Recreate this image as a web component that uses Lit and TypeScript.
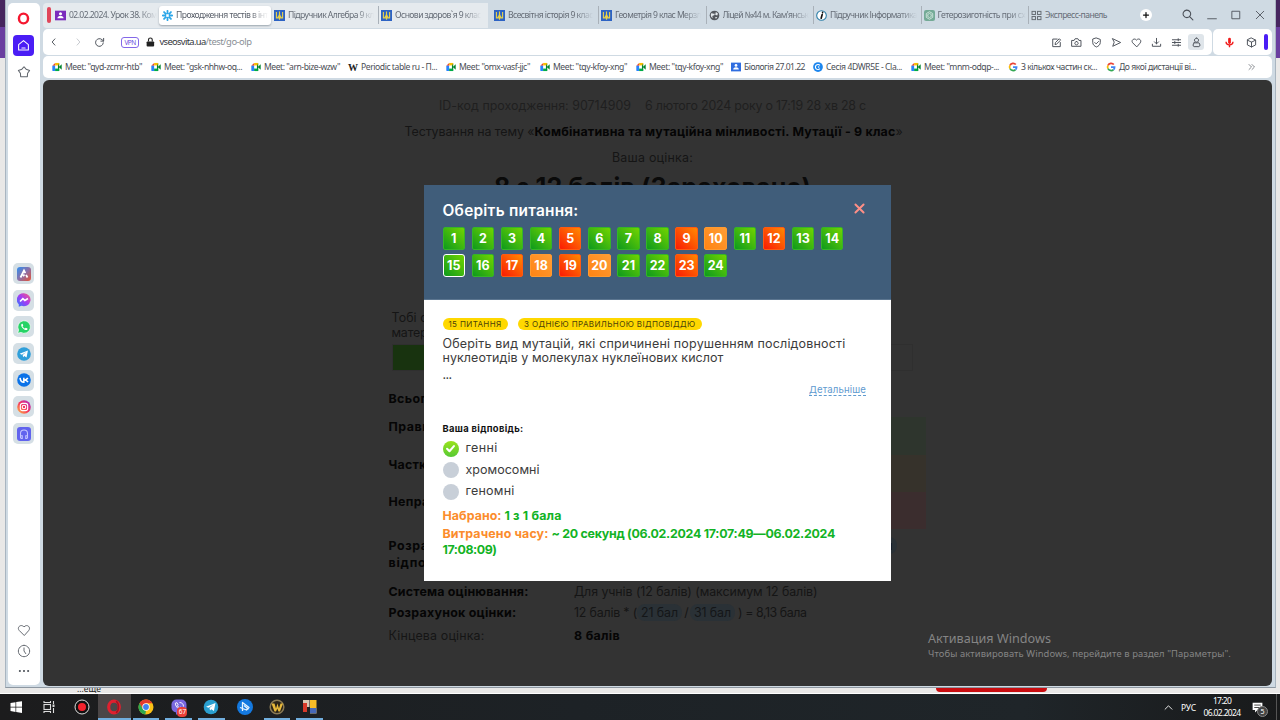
import { LitElement, html, css, svg, nothing } from "lit";
import { customElement, property, query } from "lit/decorators.js";
import { classMap } from "lit/directives/class-map.js";

/** A single line of text tracked so that it spans exactly `w` pixels. */
@customElement("fit-text")
class FitText extends LitElement {
  static styles = css`
    :host { display: inline-block; white-space: pre; flex: none; }
    .t { display: inline-block; vertical-align: top; }
  `;
  @property() text = "";
  @property({ type: Number }) w = 0;
  @query(".t") span!: HTMLElement;
  updated() {
    this.span.style.letterSpacing = "0px";
    const natural = this.span.getBoundingClientRect().width;
    const n = this.text.length;
    this.span.style.letterSpacing = `${(this.w - natural) / n}px`;
  }
  render() {
    return html`<span class="t">${this.text}</span>`;
  }
}

const fit = (text: string, w: number, cls = "") =>
  html`<fit-text class=${cls} .text=${text} .w=${w}></fit-text>`;

const icon = (size: number, body: unknown) =>
  html`<svg class="ic" width=${size} height=${size} viewBox="0 0 16 16" fill="none">${body}</svg>`;

const line = (d: string, c = "#4b5058", w = 1.4) =>
  svg`<path d=${d} stroke=${c} stroke-width=${w} stroke-linecap="round" stroke-linejoin="round"/>`;

const G: Record<string, unknown> = {
  contact: svg`<rect width="16" height="14" y="1" fill="#7b2bbd"/><circle cx="8" cy="5.5" r="2.2" fill="#fff"/><path d="M3.5 12c0-5 9-5 9 0z" fill="#fff"/>`,
  contactBlue: svg`<rect width="16" height="14" y="1" fill="#2f6de0"/><circle cx="8" cy="5.5" r="2.2" fill="#fff"/><path d="M3.5 12c0-5 9-5 9 0z" fill="#fff"/>`,
  flower: svg`<g stroke="#2ba6e8" stroke-width="2.6" stroke-linecap="round"><path d="M8 1.2V5M8 11v3.8M1.2 8H5M11 8h3.8M3 3l2.5 2.5M10.500 10.500L13 13M13 3l-2.500 2.500M5.500 10.500L3 13"/></g>`,
  trident: svg`<rect width="16" height="16" fill="#2d63c4"/><g stroke="#e8d24a" stroke-width="1.600"><path d="M3.500 3v8.500h9V3M8 2v12M5.800 11.500c0-3 2.200-2 2.200-6 0 4 2.200 3 2.200 6"/></g>`,
  globe: svg`<circle cx="8" cy="8" r="7" fill="#55595f"/><path d="M3 5c2-1 3 1 5 0 1 2-1 3-2 3S4 10 6 12c-3-1-4-4-3-7zM10 3l3 2-1 3-3-1zM9 10l3 0-2 3z" fill="#e4e9ed"/>`,
  info: svg`<circle cx="8" cy="8" r="7" fill="#fff" stroke="#2d7fa8" stroke-width="1.600"/><path d="M9 6.500L7.500 12M9.600 3.500v.4" stroke="#111" stroke-width="2.400" stroke-linecap="round"/>`,
  gpt: svg`<rect width="16" height="16" rx="3" fill="#74aa96"/><g stroke="#d9ebe3" stroke-width="1.200"><path d="M8 2.500l4.700 2.700v5.500L8 13.500l-4.700-2.800V5.200z"/><path d="M5.500 6.500L8 5l2.500 1.500v3L8 11 5.500 9.500z"/></g>`,
  grid: svg`<g stroke="#646a72" stroke-width="1.400"><rect x="1.500" y="2" width="5" height="4.500"/><rect x="9.500" y="2" width="5" height="4.500"/><rect x="1.500" y="9.500" width="5" height="4.500"/><rect x="9.500" y="9.500" width="5" height="4.500"/></g>`,
  meet: svg`<path d="M.5 6L5 1.500V6z" fill="#ea4335"/><path d="M5 1.500h6.500v4H5z" fill="#fbbc04"/><path d="M.5 6H5v8.500H2C1 14.500.5 14 .5 13z" fill="#2684fc"/><path d="M5 10.500h6.500v4H5z" fill="#00ac47"/><path d="M11.500 2v12.500L9.500 10V6zM11 8l4.500-4.500v9z" fill="#00832d"/>`,
  google: svg`<g stroke-width="2.800"><path d="M12.500 4A5.600 5.600 0 0 0 3.200 5.300" stroke="#ea4335"/><path d="M3.200 5.300a5.600 5.600 0 0 0 0 5.400" stroke="#fbbc04"/><path d="M3.200 10.700a5.600 5.600 0 0 0 8.800 1.400" stroke="#34a853"/><path d="M12 12.100c1.100-1 1.700-2.300 1.700-3.900H8" stroke="#4285f4"/></g>`,
  classtime: svg`<circle cx="8" cy="8" r="7.800" fill="#1c86ee"/><path d="M11 5.500a4 4 0 1 0 0 5" stroke="#fff" stroke-width="1.800"/><circle cx="9" cy="8" r="1.300" fill="#fff"/>`,
};

const TABS: [string, string, number][] = [
  ["contact", "02.02.2024. Урок 38. Ком", 88],
  ["flower", "Проходження тестів в інт", 92],
  ["trident", "Підручник Алгебра 9 кл", 86],
  ["trident", "Основи здоров`я 9 клас", 86],
  ["trident", "Всесвітня історія 9 клас", 85],
  ["trident", "Геометрія 9 клас Мерзл", 86],
  ["globe", "Ліцей №44 м. Кам'янськ", 86],
  ["info", "Підручник Інформатика", 87],
  ["gpt", "Гетерозиготність при сх", 88],
  ["grid", "Экспресс-панель", 62],
];

const MARKS: [string, string, number][] = [
  ["meet", 'Meet: "qyd-zcmr-htb"', 77],
  ["meet", 'Meet: "gsk-nhhw-oq...', 78],
  ["meet", 'Meet: "arn-bize-wzw"', 76],
  ["wiki", "Periodic table ru - П...", 76],
  ["meet", 'Meet: "omx-vasf-jjc"', 71],
  ["meet", 'Meet: "tqy-kfoy-xng"', 74],
  ["meet", 'Meet: "tqy-kfoy-xng"', 74],
  ["contactBlue", "Біологія 27.01.22", 61],
  ["classtime", "Сесія 4DWR5E - Cla...", 76],
  ["meet", 'Meet: "mnm-odqp-...', 75],
  ["google", "З кількох частин ск...", 76],
  ["google", "До якої дистанції ві...", 77],
];

const TOOLS = [
  line("M9 3H2.500v11h11V8M6 10.500l.5-2.500L12 2.500l2 2L8.500 10z"),
  line("M1.500 5h3L6 2.500h4L11.500 5h3v8.500h-13zM8 6.500a2.500 2.500 0 1 0 .01 0"),
  line("M8 1.500l5.500 2v4.500c0 3.500-3 5.500-5.500 6.500-2.500-1-5.500-3-5.500-6.500V3.500zM5.500 8l2 2 3.500-3.500"),
  line("M2.500 2.500L14 8 2.500 13.500l2-5.500z"),
  line("M8 14L2.500 8.500C-.5 5 4.500.5 8 4.500 11.500.5 16.500 5 13.500 8.500z"),
  line("M8 2v8M5 7l3 3 3-3M2 10.500V13.500h12V10.500"),
  line("M2 4h12M2 8h12M2 12h12M10.500 2.500v3M5.500 6.500v3M10.500 10.500v3"),
];

const SOCIAL = [
  svg`<defs><linearGradient id="ga" x2="1" y2="1"><stop stop-color="#2f8ff0"/><stop offset=".5" stop-color="#8a6fa8"/><stop offset="1" stop-color="#e8502f"/></linearGradient></defs><rect width="16" height="16" rx="3.500" fill="url(#ga)"/><path d="M4 12l4-8 1.500 3M10.300 9L12 12M7 10.500l1.500-2" stroke="#fff" stroke-width="2"/>`,
  svg`<defs><linearGradient id="gm" x1="0" y1="1" x2="1" y2="0"><stop stop-color="#2a7bff"/><stop offset=".5" stop-color="#a23cf5"/><stop offset="1" stop-color="#ff5f78"/></linearGradient></defs><path d="M8 .3a7.700 7.400 0 1 1-3 14.300L2 15.700v-2.800A7.400 7.400 0 0 1 8 .3z" fill="url(#gm)"/><path d="M3.500 9.800l3.200-3.300 2.300 2 3.500-2.200" stroke="#fff" stroke-width="1.800"/>`,
  svg`<path d="M.8 15.200l1-3.800A7.200 7.200 0 1 1 4.500 14.200z" fill="#25d366" stroke="#fff" stroke-width=".8"/><path d="M5.200 4.500c-1 1.500 0 3.500 1.800 5.200s3.800 2.300 4.800 1.300l.2-1.300-2-.9-.9 1C7.800 9.200 6.700 8 6.400 7l.8-.8-.8-1.900z" fill="#fff"/>`,
  svg`<circle cx="8" cy="8" r="7.800" fill="#2f9fda"/><path d="M3 7.800l9.500-3.700-1.600 8-2.600-1.900-1.300 1.400-.5-2.500 4-3.300-5 3z" fill="#fff"/>`,
  svg`<circle cx="8" cy="8" r="7.800" fill="#0a72e8"/><path d="M3.500 5.500c.3 3 1.700 5 4.300 5V5.500M12.300 5.500C11.500 7 10.300 8 8.500 8c2 0 3.200 1 4 2.500" stroke="#fff" stroke-width="1.800"/>`,
  svg`<defs><linearGradient id="gi" y1="1" x2="1" y2="0"><stop stop-color="#ffc13d"/><stop offset=".5" stop-color="#f5335f"/><stop offset="1" stop-color="#a32bd0"/></linearGradient></defs><circle cx="8" cy="8" r="7.800" fill="url(#gi)"/><rect x="3.800" y="3.800" width="8.400" height="8.400" rx="2.500" stroke="#fff" stroke-width="1.300"/><circle cx="8" cy="8" r="2" stroke="#fff" stroke-width="1.300"/>`,
  svg`<rect width="16" height="16" rx="3.500" fill="#6163ee"/><path d="M4 12.500V7.500a4 4 0 0 1 8 0v5M4 10h2v3H4M12 10h-2v3h2" stroke="#c5c6ff" stroke-width="1.200"/>`,
];

const APPS: { g: unknown; on?: boolean; active?: boolean; badge?: string }[] = [
  { g: svg`<path d="M2.500 4l5-.8v4.500h-5zM8.200 3.100l5.800-.9v5.500H8.200zM2.500 8.400h5v4.500l-5-.8zM8.200 8.400H14v5.500l-5.800-.9z" fill="#fff"/>` },
  { g: svg`<g stroke="#ddd" stroke-width="1.100"><rect x="3" y="5.500" width="6.500" height="5"/><path d="M3 2v1.500h6.500V2M3 14v-1.500h6.500V14M12.500 2v3M12.500 9v5"/></g><rect x="11.500" y="5.500" width="2" height="2.500" fill="#ddd"/>` },
  { g: svg`<circle cx="8" cy="8" r="7" fill="#111" stroke="#ddd" stroke-width="1"/><circle cx="8" cy="8" r="4" fill="#f3222c"/>` },
  { g: svg`<ellipse cx="8" cy="8" rx="5.300" ry="5.900" stroke="#e0202f" stroke-width="3.200"/><path d="M10 2.200c3.300 2 3.300 9.600 0 11.600" stroke="#a5121f" stroke-width="1.500"/>`, on: true, active: true },
  { g: svg`<circle cx="8" cy="8" r="7.500" fill="#fbc116"/><path d="M1.500 4.200A7.500 7.500 0 0 1 14.500 4.300H8L4.700 9.800z" fill="#e33b2e"/><path d="M1.500 4.200L4.900 10 8 11.800 7.300 15.500A7.500 7.500 0 0 1 1.500 4.200z" fill="#2da94f"/><circle cx="8" cy="8" r="3.700" fill="#fff"/><circle cx="8" cy="8" r="2.900" fill="#3f83ee"/>`, on: true },
  { g: svg`<rect x=".5" y=".5" width="15" height="13" rx="5" fill="#7967df"/><path d="M5 13l0 3 3-3z" fill="#7967df"/><path d="M4.500 4c-1 2 3 7 6 7l1-1.500-2-1.300-1 .8C7.500 8.500 6.800 7.500 6.500 6.700l.7-.8L6 3.700zM8.500 3.500c2.500 0 4 1.500 4 4" stroke="#fff" stroke-width=".9"/>`, on: true, badge: "67" },
  { g: svg`<circle cx="8" cy="8" r="7.300" fill="#2a9fd0"/><path d="M3 7.800l9.500-3.700-1.600 8-2.600-1.900-1.300 1.400-.5-2.500 4-3.300-5 3z" fill="#fff"/>`, on: true },
  { g: svg`<circle cx="8" cy="8" r="8" fill="#1479e0"/><path d="M5.500 12V3.500L12 8.500 9.500 11 3 8.500M7 6.500l4.500 3.800" stroke="#e7f4ff" stroke-width="1.300" stroke-linejoin="round"/>` },
  { g: svg`<circle cx="8" cy="8" r="6.800" fill="#2b2418" stroke="#8a7a55" stroke-width="1.500"/><path d="M2.500 4.500h3L7 9.500l1.500-5 1.500 5 1.500-5h2.500L11 12.500H9.500L8.300 9.500 7 12.500H5.500z" fill="#e8b93a"/>`, on: true },
  { g: svg`<rect x="1" y="1" width="6.500" height="7" fill="#d9c9b4"/><rect x="8" y="1" width="6.500" height="13.500" fill="#f6bb27"/><rect x="1" y="4" width="4" height="9" fill="#d83a2a"/><rect x="8" y="9" width="6.500" height="5.500" fill="#4668b8"/><rect x="5" y="8" width="3" height="6.500" fill="#222"/>`, on: true },
];

const WRONG = [5, 9, 12, 17, 19, 23];
const PARTIAL = [10, 18, 20];

@customElement("app-root")
class AppRoot extends LitElement {
  static styles = css`
    :host { display: block; width: 1280px; height: 720px; overflow: hidden; font-family: "Noto Sans", sans-serif; }
    * { box-sizing: border-box; }
    .ic { display: block; flex: none; }
    .desk { width: 1280px; height: 720px; display: grid; grid-template-rows: 688px 6px 26px;
      background: linear-gradient(#46265f 0 27px, #6a3fa0 27px 58px, #e9e8e7 58px); }
    .win { margin-left: 5px; width: 1271px; background: #cfdae3; border-left: 1px solid #a9b5c0; border-right: 1px solid #a9b5c0; border-bottom: 1px solid #8d97a1;
      display: grid; grid-template-columns: 32px 1229px; column-gap: 3px; padding-left: 2px; }
    .side { margin-top: 3px; height: 682px; background: #fff; border-radius: 5px; display: grid;
      grid-template-rows: 31px 22px 31px 176px 187px 169.500px 21px 21px 18px; justify-items: center; align-items: center; padding-right: 1px; }
    .home { width: 21px; height: 21px; border-radius: 4px; background: #4a1df5; display: grid; place-items: center; }
    .socials { display: grid; grid-auto-rows: 26.700px; align-self: start; grid-row: 5; }
    .soc { width: 21px; height: 21px; border-radius: 5px; background: #d5dfe5; display: grid; place-items: center; }
    .main { display: grid; grid-template-columns: 1229px; grid-template-rows: 29px 27px 24px 606px; min-width: 0; }
    .top { display: flex; position: relative; }
    .tabs { display: grid; margin-top: 3px; height: 25px; padding-left: 9px;
      grid-template-columns: 107px 112px 107px 113px 107px 107.500px 107.500px 107.500px 107.500px 88px;
      background: linear-gradient(90deg, #e5eaee 0 445px, transparent 445px); border-radius: 4px; }
    .tab { display: flex; align-items: center; padding-left: 3px; gap: 3px; font-size: 8.600px; line-height: 13px; color: #666d77; overflow: hidden; height: 18px; margin-top: 3px; }
    .tab.sep { border-left: 1px solid #a9b1b9; padding-left: 2px; }
    .tab .fade { -webkit-mask-image: linear-gradient(90deg, #000 80%, transparent); }
    .tab.act { background: #fff; border-radius: 3px; box-shadow: 0 1px 2px #9aa4ad; color: #5b616b; height: 19px; }
    .redbar { position: absolute; left: 4px; top: 7px; width: 4px; height: 16px; border-radius: 2px; background: #e0465a; }
    .ctl { display: grid; grid-template-columns: 60px 24px 24px 24px 24px; align-items: center; justify-items: center; }
    .plus { width: 12px; height: 12px; border-radius: 6px; background: #fff; display: grid; place-items: center; }
    .addr { display: grid; grid-template-columns: 1169px 59px; column-gap: 1px; height: 26px; }
    .panel { background: #fff; border-radius: 5px; display: flex; align-items: center; }
    .nav { display: grid; grid-template-columns: 22.500px 25px 18px 42px 0 9px 1fr 160px 6px; justify-items: center; align-items: center; width: 100%; }
    .vpn { font-size: 6.500px; line-height: 9px; border: 1px solid #8468e8; border-radius: 3px; color: #6a48e0; height: 11px; padding: 0 3px; width: 18px; }
    .url { justify-self: start; font-size: 9.400px; line-height: 14px; color: #8a8f96; display: flex; }
    .host { color: #33363b; }
    .tools { display: grid; grid-template-columns: repeat(8, 20px); justify-items: center; align-items: center; }
    .user { width: 16px; height: 16px; border-radius: 3px; background: #dfe5ea; display: grid; place-items: center; }
    .ext { display: grid; grid-template-columns: 32px 12px 15px; justify-items: center; width: 100%; align-items: center; }
    .purple { width: 4px; height: 16px; border-radius: 2px; background: #4a1df5; margin-left: 3px; }
    .marks { display: grid; height: 22px; padding-left: 9px; font-size: 8.600px; line-height: 13px; color: #4a4e55;
      grid-template-columns: 99px 100px 97px 98px 94px 96px 95px 82px 98px 97px 98px 142px 12px; }
    .mark { display: flex; gap: 3px; align-items: center; }
    .w { width: 10px; font: bold 10px "Liberation Serif", serif; color: #222; }
    .page { height: 606px; width: 1229px; border-radius: 6px; background: #333; position: relative; overflow: hidden;
      font-family: Inter, sans-serif; font-size: 12.400px; line-height: 15px; color: #151515; }
    .doc { display: grid; grid-template-rows: 12px 26px 26px 26px 38px 102px 15px 15px 4px 27px 14px 27px 5px 37.500px 37.500px 36.500px 8px 17.500px 17px 10px 20px 22px 25px;
      width: 541px; margin-left: 345.500px; align-items: center; }
    .mid { justify-self: center; display: flex; padding-right: 13px; }
    .faint { color: #1f1f1f; }
    b, .b { font-weight: 700; color: #050505; }
    .h { font-size: 25px; font-weight: 700; color: #0a0a0a; align-self: start; line-height: 30px; padding-top: 2px; }
    .ind { padding-left: 3px; }
    .bar { margin-left: 3px; width: 521.500px; height: 27px; border: 1px solid #2f2f2f; background: linear-gradient(90deg, #18330f 0 350px, transparent 350px); }
    .kv { display: grid; grid-template-columns: 185.500px 352px; height: 100%; align-items: center; }
    .kv.tall { align-items: start; }
    .tall b { padding-top: 2px; }
    .cell { height: 100%; }
    .ok { background: #2e352d; } .part { background: #36322b; } .bad { background: #3b2d2e; }
    .pills { display: flex; align-items: center; }
    .pill { background: #2a3136; border-radius: 8px; height: 17px; line-height: 17px; padding: 0 4px; color: #141618; }
    .end { justify-self: end; margin-right: 29px; }
    .water { position: absolute; left: 885px; top: 550px; color: #858585; font-family: "Noto Sans", sans-serif; font-size: 9.400px; line-height: 14px; display: grid; grid-template-rows: 17px 14px; align-items: center; }
    .water .big { font-size: 12.600px; line-height: 17px; }
    .modal { position: absolute; left: 381px; top: 104.500px; width: 466.500px; height: 396.500px; background: #fff; color: #3c3c3c; }
    .head { height: 115px; background: #405d7a; padding: 17px 24.500px 0 18.500px; display: grid; grid-template-rows: 18px 7px auto; border-bottom: 1px solid #5c7690; }
    .title { display: flex; justify-content: space-between; color: #fff; font-size: 15.400px; font-weight: 600; line-height: 18px; }
    .nums { display: grid; grid-template-columns: repeat(14, 29.120px); grid-auto-rows: 27px; }
    .num { width: 22.500px; height: 23px; border-radius: 2px; display: grid; place-items: center; color: #fff; font-weight: 700; font-size: 12.500px;
      background: linear-gradient(45deg, #0d9a1d, #72d400); border: 1px solid #35b528; }
    .num.wrong { background: linear-gradient(45deg, #fb1a05, #ff8a00); border-color: #ff5a12; }
    .num.partial { background: linear-gradient(45deg, #ff8414, #ff9d35); border-color: #ff9a30; }
    .num.cur { border: 1.500px solid #fff; border-radius: 3px; }
    .body { padding: 18px 24.500px 0 18.500px; display: grid; grid-template-rows: 12.500px 5.500px 15px 14.500px 18.500px 13px 26px 13px 1.500px 21.500px 21.500px 21.500px 4px 19px 18px 13px; align-items: center; }
    .tags { display: flex; gap: 10.500px; }
    .tag { background: #ffd800; border-radius: 7px; height: 12.500px; line-height: 12px; font-size: 8px; color: #4b4208; padding: 0 6px; }
    .more { justify-self: end; font-size: 9.600px; color: #5f9bd0; line-height: 11px; border-bottom: 1px dashed #5f9bd0; }
    .small { font-size: 9.400px; line-height: 12px; font-weight: 700; color: #111; }
    .q { font-size: 12.500px; line-height: 15px; }
    .opt { display: flex; align-items: center; gap: 7px; }
    .dot { width: 16px; height: 16px; border-radius: 8px; background: #c8cfd8; margin-top: 2px; display: grid; place-items: center; }
    .dot.on { background: linear-gradient(#9ae31c, #56c934); }
    .res { font-weight: 700; font-size: 12.400px; line-height: 13px; color: #12b325; display: flex; gap: 3px; }
    .or { color: #fb8c2c; }
    .behind { display: grid; grid-template-columns: 77px 859px 111px; overflow: hidden; background: #e9e8e7; font-size: 8.500px; line-height: 2px; color: #222; border-bottom: 1px solid #fff; }
    .redbtn { background: #c90d10; height: 4px; border-radius: 0 0 4px 4px; }
    .task { background: linear-gradient(90deg, #1c1c1d, #1d2226 45%, #1f2529 80%, #191a1b); display: flex; justify-content: space-between; color: #fff; }
    .apps { display: grid; grid-template-columns: repeat(10, 32.700px); }
    .app { display: grid; place-items: center; position: relative; }
    .app.active { background: #4b4647; }
    .app.on { border-bottom: 2px solid #71aede; padding-top: 2px; margin-right: 4px; margin-left: 2px; }
    .app.on.active { margin: 0; }
    .bdg { position: absolute; left: 12px; top: 13px; background: #ea4038; border-radius: 4px; font-size: 6.500px; line-height: 10px; height: 10px; width: 10px; text-align: center; }
    .tray { display: grid; grid-template-columns: 18px 18px 46px 31px 3px; align-items: center; font-size: 8.500px; margin-right: 1px; }
    .clock { display: grid; grid-template-rows: 12px 12px; justify-items: center; line-height: 12px; }
    .note { position: relative; justify-self: start; margin-left: 6px; }
    .five { position: absolute; left: 6px; top: 5px; width: 11px; height: 11px; border-radius: 6px; background: #444; border: 1px solid #888; font-size: 7px; line-height: 9px; text-align: center; }
    .edge { border-left: 1px solid #555; height: 26px; }
  `;

  private num(n: number) {
    const cls = { num: true, wrong: WRONG.includes(n), partial: PARTIAL.includes(n), cur: n === 15 };
    return html`<div class=${classMap(cls)}>${n}</div>`;
  }

  private side() {
    return html`<div class="side">
      ${icon(13, svg`<ellipse cx="8" cy="8" rx="5.600" ry="6" stroke="#f5172f" stroke-width="3"/>`)}
      <div class="home">${icon(13, line("M8 2l6 5v6.500H2V7zM6 11h4", "#fff", 1.3))}</div>
      ${icon(14, line("M8 2l2.400 2.800 4 1.500-2.300 3.200-.3 4H4.200l-.3-4-2.300-3.200 4-1.500z", "#60656c", 1.2))}
      <span></span>
      <div class="socials">${SOCIAL.map((s) => html`<div class="soc">${icon(14, s)}</div>`)}</div>
      <span></span>
      ${icon(14, line("M8 14L2.500 8.500C-.5 5 4.500.5 8 4.500 11.500.5 16.500 5 13.500 8.500z", "#60656c", 1.1))}
      ${icon(14, line("M8 1.500a6.500 6.500 0 1 0 .01 0M8 4.500V8l2 3", "#60656c", 1.1))}
      ${icon(12, svg`<g fill="#4b5058"><circle cx="2.500" cy="8" r="1.400"/><circle cx="8" cy="8" r="1.400"/><circle cx="13.500" cy="8" r="1.400"/></g>`)}
    </div>`;
  }

  private chrome() {
    return html`
      <div class="top">
        <div class="redbar"></div>
        <div class="tabs">
          ${TABS.map(([g, t, w], i) => html`<div class=${classMap({ tab: true, act: i === 1, sep: i === 3 || i > 4 })}>
            ${icon(11, G[g])}${fit(t, w, i === 9 ? "" : "fade")}</div>`)}
        </div>
        <div class="ctl">
          <div class="plus">${icon(8, line("M8 3v10M3 8h10", "#111", 2.5))}</div>
          ${icon(12, line("M6.500 1.500a5 5 0 1 0 .01 0M10.200 10.200L14.500 14.500"))}
          ${icon(10, line("M1 14h14"))}
          ${icon(10, line("M2 2h12v12H2z"))}
          ${icon(10, line("M2 2l12 12M14 2L2 14"))}
        </div>
      </div>
      <div class="addr">
        <div class="panel"><div class="nav">
          ${icon(10, line("M9.500 3L5 8l4.500 5", "#4b5058", 1.5))}
          ${icon(10, line("M6.500 3L11 8l-4.500 5", "#c4c8cd", 1.5))}
          ${icon(11, line("M13.500 8.500A5.600 5.600 0 1 1 11.800 4l2 1.800M14 2v4h-4"))}
          <div class="vpn">${fit("VPN", 11)}</div>
          ${icon(10, svg`<rect x="1" y="7" width="12" height="8" rx="1.500" fill="#222"/><path d="M4 7V4.500a3 3 0 0 1 6 0V7" stroke="#222" stroke-width="1.800"/>`)}
          <span></span>
          <div class="url">${fit("vseosvita.ua", 46, "host")}${fit("/test/go-olp", 46)}</div>
          <div class="tools">${TOOLS.map((t) => icon(11, t))}
            <div class="user">${icon(11, line("M8 1.500a3 3 0 1 0 .01 0M4.500 8.500h7c2 2 2 5 0 5.500h-7c-2-.5-2-3.500 0-5.500z"))}</div></div>
          <span></span>
        </div></div>
        <div class="panel"><div class="ext">
          ${icon(11, svg`<rect x="6" y="1" width="4" height="9" rx="2" fill="#f01a1a"/><path d="M3 7c0 6 10 6 10 0M8 11v4" stroke="#f01a1a" stroke-width="2"/>`)}
          ${icon(11, line("M8 1.500l6 3v7l-6 3-6-3v-7zM2 4.500l6 3 6-3M8 7.500v7"))}
          <div class="purple"></div>
        </div></div>
      </div>
      <div class="panel marks">
        ${MARKS.map(([g, t, w]) => html`<div class="mark">${g === "wiki" ? html`<span class="w">W</span>` : icon(10, G[g])}${fit(t, w)}</div>`)}
        ${icon(8, line("M2 3l5 5-5 5M8 3l5 5-5 5", "#60656c", 1.5))}
      </div>`;
  }

  private doc() {
    return html`<div class="doc">
      <span></span>
      <div class="mid faint">${fit("ID-код проходження: 90714909", 192)}${fit("    ", 14)}${fit("6 лютого 2024 року о 17:19 28 хв 28 с", 221)}</div>
      <div class="mid">${fit("Тестування на тему «", 130)}${fit("Комбінативна та мутаційна мінливості. Мутації - 9 клас", 361, "b")}${fit("»", 5)}</div>
      <div class="mid">${fit("Ваша оцінка:", 81)}</div>
      <div class="mid h">${fit("8 з 12 балів (Зараховано)", 317)}</div>
      <span></span>
      <div class="ind">${fit("Тобі с", 36)}</div>
      <div class="ind">${fit("матер", 36)}</div>
      <span></span>
      <div class="bar"></div>
      <span></span>
      <b>${fit("Всьог", 38)}</b>
      <span></span>
      <div class="kv tall"><b>${fit("Прави", 42)}</b><span class="cell ok"></span></div>
      <div class="kv tall"><b>${fit("Частк", 38)}</b><span class="cell part"></span></div>
      <div class="kv tall"><b>${fit("Непра", 41)}</b><span class="cell bad"></span></div>
      <span></span>
      <div class="kv"><b>${fit("Розра", 40)}</b><b class="pill end">${fit("л", 8)}</b></div>
      <div class="kv"><b>${fit("відпо", 38)}</b><span></span></div>
      <span></span>
      <div class="kv"><b>${fit("Система оцінювання:", 140)}</b>${fit("Для учнів (12 балів) (максимум 12 балів)", 243.5)}</div>
      <div class="kv"><b>${fit("Розрахунок оцінки:", 128)}</b>
        <div class="pills">${fit("12 балів * (", 63)}<span class="pill">${fit("21 бал", 37)}</span>${fit(" / ", 8)}<span class="pill">${fit("31 бал", 37)}</span>${fit(" ) = 8,13 бала", 71.5)}</div></div>
      <div class="kv">${fit("Кінцева оцінка:", 96)}<b>${fit("8 балів", 46)}</b></div>
    </div>`;
  }

  private modal() {
    const option = (t: string, w: number, on = false) => html`<div class="opt">
      <span class=${classMap({ dot: true, on })}>${on ? icon(11, line("M3 8.500l3.500 3.500L13 4.500", "#fff", 3)) : nothing}</span>${fit(t, w, "q")}</div>`;
    return html`<div class="modal">
      <div class="head">
        <div class="title">${fit("Оберіть питання:", 136)}${icon(13, line("M3 3l10 10M13 3L3 13", "#ff8f86", 2.4))}</div>
        <span></span>
        <div class="nums">${Array.from({ length: 24 }, (_, i) => this.num(i + 1))}</div>
      </div>
      <div class="body">
        <div class="tags"><span class="tag">${fit("15 ПИТАННЯ", 53)}</span><span class="tag">${fit("З ОДНІЄЮ ПРАВИЛЬНОЮ ВІДПОВІДДЮ", 171.5)}</span></div>
        <span></span>
        ${fit("Оберіть вид мутацій, які спричинені порушенням послідовності", 403, "q")}
        ${fit("нуклеотидів у молекулах нуклеїнових кислот", 281, "q")}
        ${fit("...", 9, "q")}
        ${fit("Детальніше", 57, "more")}
        <span></span>
        ${fit("Ваша відповідь:", 81, "small")}
        <span></span>
        ${option("генні", 32, true)}
        ${option("хромосомні", 74)}
        ${option("геномні", 49)}
        <span></span>
        <div class="res">${fit("Набрано:", 59, "or")}${fit("1 з 1 бала", 57)}</div>
        <div class="res">${fit("Витрачено часу:", 106, "or")}${fit("~ 20 секунд (06.02.2024 17:07:49—06.02.2024", 283.5)}</div>
        <div class="res">${fit("17:08:09)", 54)}</div>
      </div>
    </div>`;
  }

  render() {
    return html`<div class="desk">
      <div class="win">
        ${this.side()}
        <div class="main">
          ${this.chrome()}
          <div class="page">
            ${this.doc()}
            ${this.modal()}
            <div class="water">${fit("Активация Windows", 123, "big")}${fit('Чтобы активировать Windows, перейдите в раздел "Параметры".', 303)}</div>
          </div>
        </div>
      </div>
      <div class="behind"><span></span><span>...еще</span><span class="redbtn"></span></div>
      <div class="task">
        <div class="apps">${APPS.map((a) => html`<div class=${classMap({ app: true, on: !!a.on, active: !!a.active })}>
          ${icon(16, a.g)}${a.badge ? html`<span class="bdg">${a.badge}</span>` : nothing}</div>`)}</div>
        <div class="tray">
          ${icon(11, line("M3 10.500l5-5 5 5", "#eee", 1.4))}
          ${fit("РУС", 15)}
          <div class="clock">${fit("17:20", 18)}${fit("06.02.2024", 37)}</div>
          <div class="note">${icon(13, svg`<path d="M2 2h12v9H8l-3 3v-3H2z" fill="#fff"/><path d="M4 5h8M4 8h8" stroke="#222"/>`)}<span class="five">5</span></div>
          <span class="edge"></span>
        </div>
      </div>
    </div>`;
  }
}
